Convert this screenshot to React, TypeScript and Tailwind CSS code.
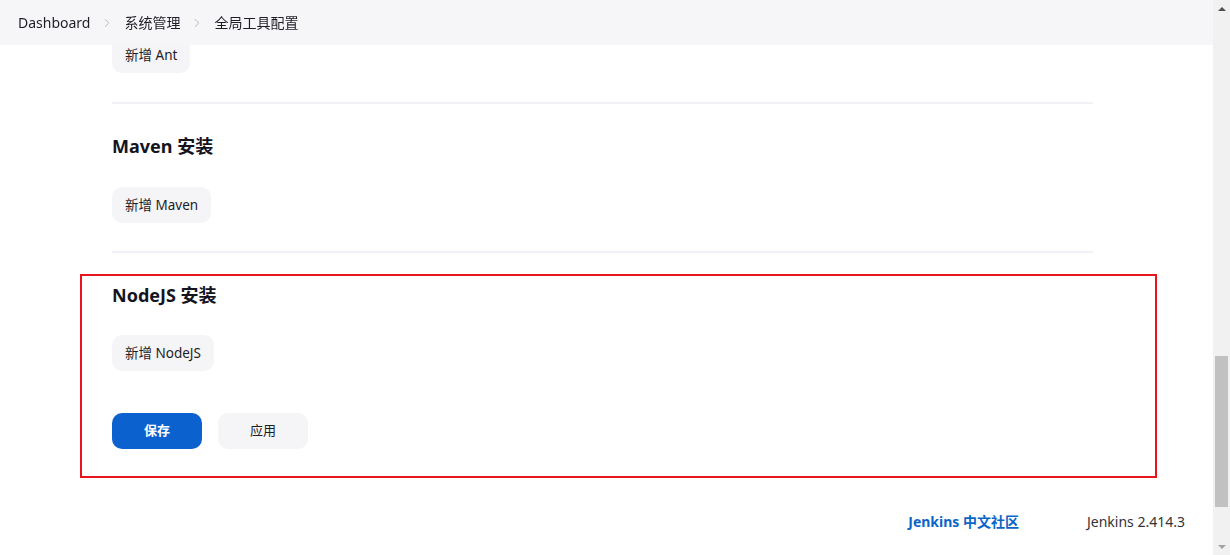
import { ChevronRight } from "lucide-react";

const font = { fontFamily: '"Noto Sans", "Noto Sans CJK SC", sans-serif' };

function AddButton({ label }: { label: string }) {
	return (
		<button className="h-9 rounded-[10px] bg-[#f5f5f8] px-[13px] text-[13.5px] text-[#1d1d26]">
			{label}
		</button>
	);
}

function Crumb({ label, last }: { label: string; last?: boolean }) {
	return (
		<div className="flex items-center">
			<span className="text-[14px] text-[#1d1d26]">{label}</span>
			{!last && (
				<ChevronRight className="mx-[10px] h-[14px] w-[14px] text-[#a0a0a8]" strokeWidth={1.25} />
			)}
		</div>
	);
}

function Divider() {
	return <div className="h-[2px] w-[981px] bg-[#f2f2f6]" />;
}

function Scrollbar() {
	return (
		<div className="flex h-full w-[17px] flex-col items-center bg-[#f1f1f1]">
			<div className="flex h-[17px] items-center justify-center">
				<div className="h-0 w-0 border-x-[4px] border-b-[4px] border-x-transparent border-b-[#505050]" />
			</div>
			<div className="flex-1" />
			<div className="mb-[31px] h-[151px] w-[13px] bg-[#c1c1c1]" />
			<div className="flex h-[17px] items-center justify-center">
				<div className="h-0 w-0 border-x-[4px] border-t-[4px] border-x-transparent border-t-[#a3a3a3]" />
			</div>
		</div>
	);
}

export default function App() {
	return (
		<div className="flex h-[555px] w-[1230px] overflow-hidden bg-white" style={font}>
			<div className="relative w-[1213px]">
				<header className="absolute inset-x-0 top-0 z-10 flex h-[45px] items-center bg-[#f6f6f8]/95 pl-[18px] backdrop-blur">
					<Crumb label="Dashboard" />
					<Crumb label="系统管理" />
					<Crumb label="全局工具配置" last />
				</header>

				<main className="pt-[37px]">
					<div className="pl-[112px]">
						<AddButton label="新增 Ant" />
						<div className="mt-[29px]">
							<Divider />
						</div>

						<h2 className="mt-[30px] text-[18px] leading-6 font-bold text-[#14141f]">Maven 安装</h2>
						<div className="mt-[29px]">
							<AddButton label="新增 Maven" />
						</div>
						<div className="mt-[28px]">
							<Divider />
						</div>
					</div>

					<div className="mt-[21px] ml-[80px] w-[1077px] border-2 border-[#e8151f] pt-[7px] pb-[27px] pl-[30px]">
						<h2 className="text-[18px] leading-6 font-bold text-[#14141f]">NodeJS 安装</h2>
						<div className="mt-[28px]">
							<AddButton label="新增 NodeJS" />
						</div>
						<div className="mt-[42px] flex gap-4">
							<button className="h-9 w-[90px] rounded-[10px] bg-[#0b62cf] text-[13px] font-bold text-white">
								保存
							</button>
							<button className="h-9 w-[90px] rounded-[10px] bg-[#f5f5f8] text-[13px] text-[#1d1d26]">
								应用
							</button>
						</div>
					</div>

					<footer className="mt-[34px] flex items-center justify-end pr-[28px] text-[14px] leading-5">
						<a className="font-bold text-[#0b65c9]">Jenkins 中文社区</a>
						<span className="ml-[68px] text-[#333338]">Jenkins 2.414.3</span>
					</footer>
				</main>
			</div>
			<Scrollbar />
		</div>
	);
}
